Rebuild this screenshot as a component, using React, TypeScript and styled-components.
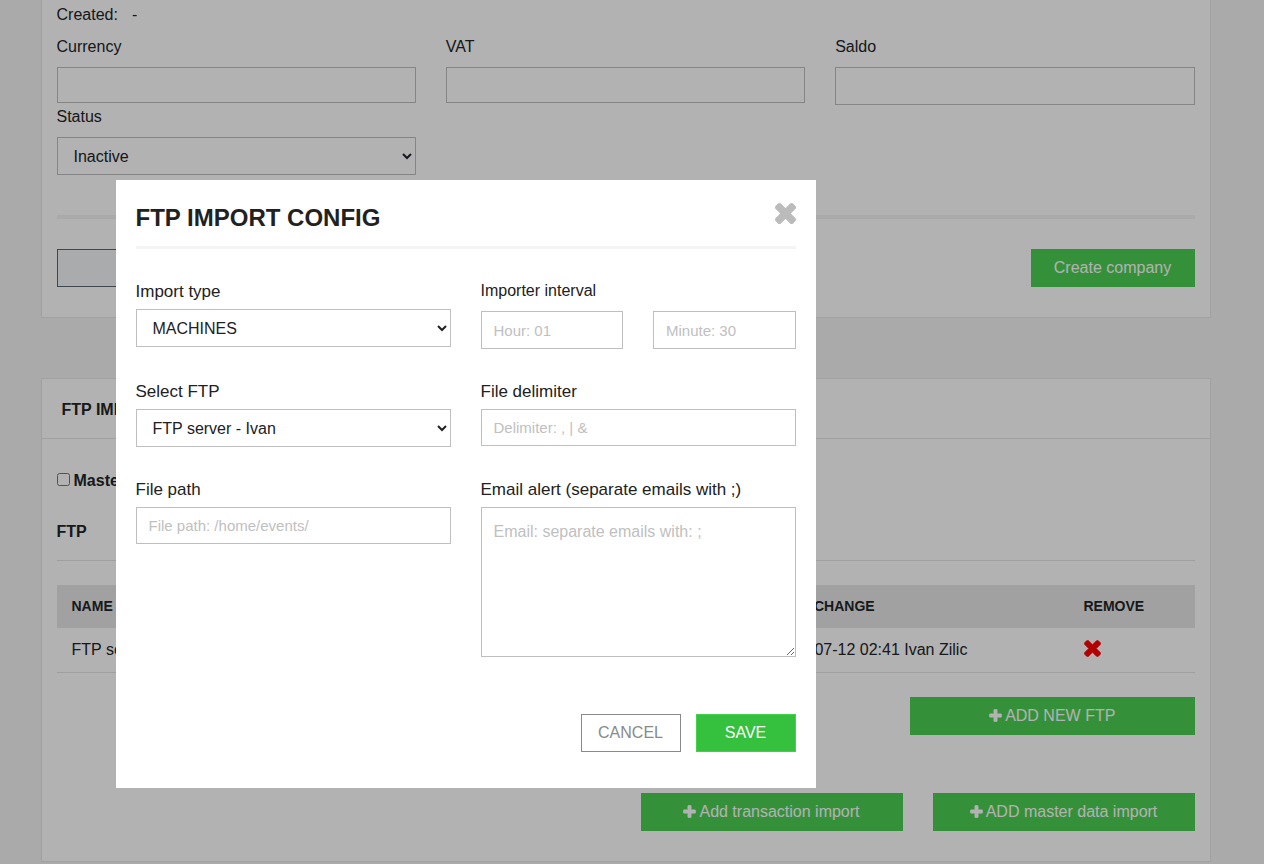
import React from "react";
import styled, { createGlobalStyle } from "styled-components";

const GlobalStyle = createGlobalStyle`
  *, *::before, *::after { box-sizing: border-box; }
  body {
    margin: 0;
    background: #f4f4f4;
    color: #212529;
    font-family: "Liberation Sans", Arial, sans-serif;
    font-size: 16px;
    line-height: 24px;
  }
  button, input, select, textarea { font: inherit; color: inherit; margin: 0; }
`;

const Page = styled.main`
  display: flex;
  flex-direction: column;
  align-items: center;
  gap: 60px;
  padding-right: 13px;
`;

const Card = styled.section<{ $open?: boolean }>`
  width: 100%;
  max-width: 1170px;
  background: #fff;
  border: 1px solid #e7e7e7;
  border-top-width: ${(p) => (p.$open ? 0 : 1)}px;
`;

const CompanyBody = styled.div`
  padding: 3px 15px 30px;
`;

const CreatedLine = styled.div`
  display: flex;
  gap: 14px;
  margin-bottom: 8px;
`;

const CompanyGrid = styled.div`
  display: grid;
  grid-template-columns: repeat(3, 1fr);
  column-gap: 30px;
`;

const Column = styled.div`
  display: flex;
  flex-direction: column;
  gap: 2px;
`;

const Field = styled.div<{ $gap?: number }>`
  display: flex;
  flex-direction: column;
  gap: ${(p) => p.$gap ?? 8}px;
`;

const FormLabel = styled.label`
  font-size: 17px;
  line-height: 26px;
`;

const TextInput = styled.input<{ $height?: number }>`
  width: 100%;
  height: ${(p) => p.$height ?? 37}px;
  padding: 0 12px;
  border: 1px solid #bfbfbf;
  border-radius: 0;
  background: #fff;
  font-size: 15px;
  &::placeholder { color: #c0c0c0; opacity: 1; }
`;

const Select = styled.select`
  width: 100%;
  height: 38px;
  padding: 0 0 0 12px;
  border: 1px solid #bfbfbf;
  border-radius: 0;
  background: #fff;
`;

const TextArea = styled.textarea`
  display: block;
  width: 100%;
  height: 150px;
  padding: 12px;
  border: 1px solid #bfbfbf;
  border-radius: 0;
  background: #fff;
  resize: both;
  &::placeholder { color: #c0c0c0; opacity: 1; }
`;

const Rule = styled.hr<{ $thick?: boolean }>`
  height: ${(p) => (p.$thick ? 4 : 1)}px;
  margin: ${(p) => (p.$thick ? "40px 0 30px" : "16px 0 24px")};
  border: 0;
  background: ${(p) => (p.$thick ? "#f4f4f4" : "#e4e4e4")};
`;

const ButtonRow = styled.div<{ $top?: number; $align?: string; $gap?: number }>`
  display: flex;
  justify-content: ${(p) => p.$align ?? "flex-end"};
  gap: ${(p) => p.$gap ?? 30}px;
  margin-top: ${(p) => p.$top ?? 0}px;
`;

const Button = styled.button<{ $width: string }>`
  display: flex;
  align-items: center;
  justify-content: center;
  gap: 3px;
  width: ${(p) => p.$width};
  height: 38px;
  padding: 0 0 1px;
  border: 1px solid transparent;
  border-radius: 0;
  cursor: pointer;
`;

const GreenButton = styled(Button)`
  background: #4ccf53;
  border-color: #4ccf53;
  color: #fff;
`;

const BackButton = styled(Button)`
  background: #f3f5f7;
  border-color: #5b666e;
`;

const SaveButton = styled(Button)`
  background: #35c03d;
  border-color: #46d04d;
  color: #fff;
`;

const CancelButton = styled(Button)`
  background: #fff;
  border-color: #8a8a8a;
  color: #8a8a8a;
`;

const CardHeader = styled.h2`
  margin: 0;
  padding: 19px 20px 16px;
  border-bottom: 1px solid #e7e7e7;
  font-size: 16px;
  line-height: 24px;
`;

const ImportBody = styled.div`
  padding: 30px 15px 30px;
`;

const CheckLabel = styled.label`
  display: flex;
  align-items: center;
  gap: 4px;
  font-weight: bold;
`;

const Checkbox = styled.input`
  width: 13px;
  height: 13px;
  &&& { margin: 0 0 4px; }
`;

const SectionTitle = styled.h3`
  margin: 27px 0 0;
  font-size: 16px;
  line-height: 24px;
`;

const Table = styled.table`
  width: 100%;
  table-layout: fixed;
  border-collapse: separate;
  border-spacing: 0;
`;

const HeadCell = styled.th<{ $width?: number }>`
  width: ${(p) => (p.$width ? `${p.$width}px` : "auto")};
  height: 43px;
  padding: 0 15px 2px;
  background: #e7e7e7;
  font-size: 14px;
  text-align: left;
`;

const Cell = styled.td`
  height: 45px;
  padding: 0 15px;
  border-bottom: 1px solid #e4e4e4;
`;

const IconButton = styled.button<{ $color: string }>`
  display: block;
  padding: 0;
  border: 0;
  background: none;
  color: ${(p) => p.$color};
  cursor: pointer;
  svg { display: block; }
`;

const RemoveButton = styled(IconButton)`
  margin-bottom: 3px;
`;

const Overlay = styled.div`
  position: fixed;
  inset: 0;
  display: flex;
  justify-content: center;
  align-items: flex-start;
  padding: 180px 333px 0 0;
  background: rgba(0, 0, 0, 0.3);
`;

const Dialog = styled.form`
  width: 700px;
  max-width: 100%;
  padding: 20px 20px 36px;
  background: #fff;
  color: #212121;
`;

const DialogHeader = styled.header`
  display: flex;
  justify-content: space-between;
  align-items: flex-start;
  padding-bottom: 10px;
  border-bottom: 3px solid #f4f4f4;
`;

const DialogTitle = styled.h1`
  margin: 0;
  font-size: 24px;
  line-height: 36px;
`;

const CloseButton = styled(IconButton)`
  margin-top: 3px;
`;

const DialogGrid = styled.div`
  display: grid;
  grid-template-columns: 1fr 1fr;
  gap: 30px;
  padding-top: 30px;
`;

const IntervalField = styled.fieldset`
  min-width: 0;
  margin: 0;
  padding: 0;
  border: 0;
`;

const IntervalLegend = styled.legend`
  padding: 0 0 9px;
  line-height: 23px;
`;

const IntervalInputs = styled.div`
  display: grid;
  grid-template-columns: 1fr 1fr;
  gap: 30px;
`;

const Times = ({ size }: { size: number }) => (
  <svg
    width={size}
    height={size}
    viewBox="272 336 1248 1248"
    fill="currentColor"
    stroke="currentColor"
    strokeWidth="60"
    aria-hidden="true"
  >
    <path d="M1490 1322q0 40-28 68l-136 136q-28 28-68 28t-68-28l-294-294-294 294q-28 28-68 28t-68-28l-136-136q-28-28-28-68t28-68l294-294-294-294q-28-28-28-68t28-68l136-136q28-28 68-28t68 28l294 294 294-294q28-28 68-28t68 28l136 136q28 28 28 68t-28 68l-294 294 294 294q28 28 28 68z" />
  </svg>
);

const Plus = () => (
  <svg
    width="13"
    height="13"
    viewBox="162 98 1468 1468"
    fill="currentColor"
    stroke="currentColor"
    strokeWidth="60"
    aria-hidden="true"
  >
    <path d="M1600 736v192q0 40-28 68t-68 28h-416v416q0 40-28 68t-68 28h-192q-40 0-68-28t-28-68v-416h-416q-40 0-68-28t-28-68v-192q0-40 28-68t68-28h416v-416q0-40 28-68t68-28h192q40 0 68 28t28 68v416h416q40 0 68 28t28 68z" />
  </svg>
);

export default function App() {
  return (
    <>
      <GlobalStyle />
      <Page>
        <Card $open>
          <CompanyBody>
            <CreatedLine>
              <span>Created:</span>
              <span>-</span>
            </CreatedLine>
            <CompanyGrid>
              <Column>
                <Field>
                  <label htmlFor="currency">Currency</label>
                  <TextInput id="currency" $height={36} />
                </Field>
                <Field>
                  <label htmlFor="status">Status</label>
                  <Select id="status">
                    <option>Inactive</option>
                    <option>Active</option>
                  </Select>
                </Field>
              </Column>
              <Field>
                <label htmlFor="vat">VAT</label>
                <TextInput id="vat" $height={36} />
              </Field>
              <Field>
                <label htmlFor="saldo">Saldo</label>
                <TextInput id="saldo" $height={38} />
              </Field>
            </CompanyGrid>
            <Rule $thick />
            <ButtonRow $align="space-between">
              <BackButton type="button" $width="164px" aria-label="Back" />
              <GreenButton type="button" $width="164px">Create company</GreenButton>
            </ButtonRow>
          </CompanyBody>
        </Card>

        <Card>
          <CardHeader>FTP IMPORT</CardHeader>
          <ImportBody>
            <CheckLabel>
              <Checkbox type="checkbox" />
              Master
            </CheckLabel>
            <SectionTitle>FTP</SectionTitle>
            <Rule />
            <Table>
              <thead>
                <tr>
                  <HeadCell>NAME</HeadCell>
                  <HeadCell $width={310}>LAST CHANGE</HeadCell>
                  <HeadCell $width={126}>REMOVE</HeadCell>
                </tr>
              </thead>
              <tbody>
                <tr>
                  <Cell>FTP server - Ivan</Cell>
                  <Cell>2019-07-12 02:41 Ivan Zilic</Cell>
                  <Cell>
                    <RemoveButton type="button" $color="#ff0000" aria-label="Remove">
                      <Times size={17} />
                    </RemoveButton>
                  </Cell>
                </tr>
              </tbody>
            </Table>
            <ButtonRow $top={24}>
              <GreenButton type="button" $width="25%"><Plus />ADD NEW FTP</GreenButton>
            </ButtonRow>
            <ButtonRow $top={58}>
              <GreenButton type="button" $width="262px"><Plus />Add transaction import</GreenButton>
              <GreenButton type="button" $width="262px"><Plus />ADD master data import</GreenButton>
            </ButtonRow>
          </ImportBody>
        </Card>
      </Page>

      <Overlay>
        <Dialog role="dialog" aria-labelledby="dialog-title" onSubmit={(e) => e.preventDefault()}>
          <DialogHeader>
            <DialogTitle id="dialog-title">FTP IMPORT CONFIG</DialogTitle>
            <CloseButton type="button" $color="#bbbbbb" aria-label="Close">
              <Times size={21} />
            </CloseButton>
          </DialogHeader>
          <DialogGrid>
            <Field $gap={4}>
              <FormLabel htmlFor="import-type">Import type</FormLabel>
              <Select id="import-type">
                <option>MACHINES</option>
              </Select>
            </Field>
            <IntervalField>
              <IntervalLegend>Importer interval</IntervalLegend>
              <IntervalInputs>
                <TextInput $height={38} placeholder="Hour: 01" aria-label="Hour" />
                <TextInput $height={38} placeholder="Minute: 30" aria-label="Minute" />
              </IntervalInputs>
            </IntervalField>
            <Field $gap={4}>
              <FormLabel htmlFor="select-ftp">Select FTP</FormLabel>
              <Select id="select-ftp">
                <option>FTP server - Ivan</option>
              </Select>
            </Field>
            <Field $gap={4}>
              <FormLabel htmlFor="delimiter">File delimiter</FormLabel>
              <TextInput id="delimiter" placeholder="Delimiter: , | &amp;" />
            </Field>
            <Field $gap={4}>
              <FormLabel htmlFor="file-path">File path</FormLabel>
              <TextInput id="file-path" placeholder="File path: /home/events/" />
            </Field>
            <Field $gap={4}>
              <FormLabel htmlFor="emails">Email alert (separate emails with ;)</FormLabel>
              <TextArea id="emails" placeholder="Email: separate emails with: ;" />
            </Field>
          </DialogGrid>
          <ButtonRow $top={57} $gap={15}>
            <CancelButton type="button" $width="100px">CANCEL</CancelButton>
            <SaveButton type="submit" $width="100px">SAVE</SaveButton>
          </ButtonRow>
        </Dialog>
      </Overlay>
    </>
  );
}
